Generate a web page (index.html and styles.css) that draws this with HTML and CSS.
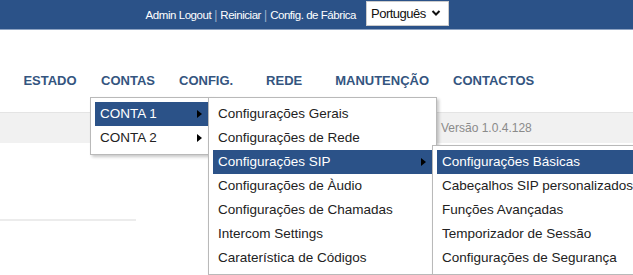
FILE: index.html
```html
<!DOCTYPE html>
<html lang="pt">
<head>
    <meta charset="UTF-8">
    <meta name="viewport" content="width=device-width, initial-scale=1.0">
    <title>Configurações SIP</title>
    <link rel="stylesheet" href="styles.css">
</head>
<body>
    <div class="top-bar">
        <a class="top-link" href="#">Admin Logout</a>
        <span class="top-sep">|</span>
        <a class="top-link" href="#">Reiniciar</a>
        <span class="top-sep">|</span>
        <a class="top-link" href="#">Config. de Fábrica</a>
        <div class="lang-select">
            <span>Português</span>
            <svg width="10" height="8" viewBox="0 0 10 8"><path d="M1.5 2 L5 5.5 L8.5 2" fill="none" stroke="#111" stroke-width="2"/></svg>
        </div>
    </div>

    <ul class="main-nav">
        <li class="nav-item">ESTADO</li>
        <li class="nav-item open">CONTAS
            <ul class="menu menu-accounts">
                <li class="menu-item active has-sub">CONTA 1
                    <ul class="menu menu-sub">
                        <li class="menu-item">Configurações Gerais</li>
                        <li class="menu-item">Configurações de Rede</li>
                        <li class="menu-item active has-sub">Configurações SIP
                            <ul class="menu menu-sub menu-sip">
                                <li class="menu-item active">Configurações Básicas</li>
                                <li class="menu-item">Cabeçalhos SIP personalizados</li>
                                <li class="menu-item">Funções Avançadas</li>
                                <li class="menu-item">Temporizador de Sessão</li>
                                <li class="menu-item">Configurações de Segurança</li>
                            </ul>
                        </li>
                        <li class="menu-item">Configurações de Àudio</li>
                        <li class="menu-item">Configurações de Chamadas</li>
                        <li class="menu-item">Intercom Settings</li>
                        <li class="menu-item">Caraterística de Códigos</li>
                    </ul>
                </li>
                <li class="menu-item has-sub">CONTA 2</li>
            </ul>
        </li>
        <li class="nav-item">CONFIG.</li>
        <li class="nav-item">REDE</li>
        <li class="nav-item">MANUTENÇÃO</li>
        <li class="nav-item">CONTACTOS</li>
    </ul>

    <div class="status-bar">Versão 1.0.4.128</div>

    <div class="side-panel"></div>
</body>
</html>
```

FILE: styles.css
```css
* {
    margin: 0;
    padding: 0;
    box-sizing: border-box;
}

html {
    overflow: hidden;
}

body {
    min-height: 100vh;
    background: #fff;
    font-family: 'Liberation Sans', Arial, sans-serif;
    color: #222;
}

ul {
    list-style: none;
}

/* top bar */
.top-bar {
    height: 30px;
    background: #2b5288;
    border-bottom: 1px solid #8ea3c2;
    display: flex;
    justify-content: flex-end;
    align-items: center;
    padding-right: 184px;
}

.top-link {
    color: #fff;
    text-decoration: none;
    font-size: 11.5px;
    letter-spacing: -0.45px;
}

.top-sep {
    color: #9fb2cd;
    font-size: 12px;
    margin: 0 3px;
}

.lang-select {
    width: 83px;
    height: 25px;
    margin-left: 10px;
    margin-bottom: 3px;
    background: #fff;
    border: 1px solid #ccc;
    display: flex;
    align-items: center;
    justify-content: space-between;
    padding: 0 7px 0 4px;
    font-size: 13px;
    letter-spacing: -0.5px;
    color: #111;
}

/* main nav */
.main-nav {
    display: flex;
    padding: 43px 0 0 11px;
}

.nav-item {
    position: relative;
    min-width: 78px;
    padding: 0 12px 8px;
    text-align: center;
    font-size: 13px;
    font-weight: bold;
    line-height: 16px;
    color: #34557f;
}

/* dropdown menus */
.menu {
    position: absolute;
    top: 100%;
    left: 1px;
    background: #fff;
    border: 1px solid #b9b9b9;
    box-shadow: 2px 2px 3px rgba(0, 0, 0, 0.22);
    padding: 4px;
    text-align: left;
    font-weight: normal;
    font-size: 13.5px;
    z-index: 10;
}

.menu-accounts {
    width: 123px;
}

.menu-sub {
    top: -5px;
    left: 100%;
    width: 229px;
}

.menu-sip {
    width: 240px;
}

.menu-item {
    position: relative;
    height: 24px;
    line-height: 24px;
    padding: 0 5px;
    color: #222;
    white-space: nowrap;
}

.menu-item.active {
    background: #2b5288;
    color: #fff;
}

.menu-item.has-sub::after {
    content: "";
    position: absolute;
    right: 6px;
    top: 8px;
    border-left: 5px solid #000;
    border-top: 4px solid transparent;
    border-bottom: 4px solid transparent;
}

.menu-item .menu-item {
    color: #222;
    background: #fff;
}

.menu-item .menu-item.active {
    background: #2b5288;
    color: #fff;
}

/* status bar */
.status-bar {
    margin-top: 15px;
    height: 31px;
    background: #f1f1f1;
    border-top: 1px solid #e4e4e4;
    padding-left: 441px;
    line-height: 30px;
    font-size: 12px;
    color: #8a8a8a;
}

.side-panel {
    width: 136px;
    height: 78px;
    border-bottom: 2px solid #ececec;
}
```
